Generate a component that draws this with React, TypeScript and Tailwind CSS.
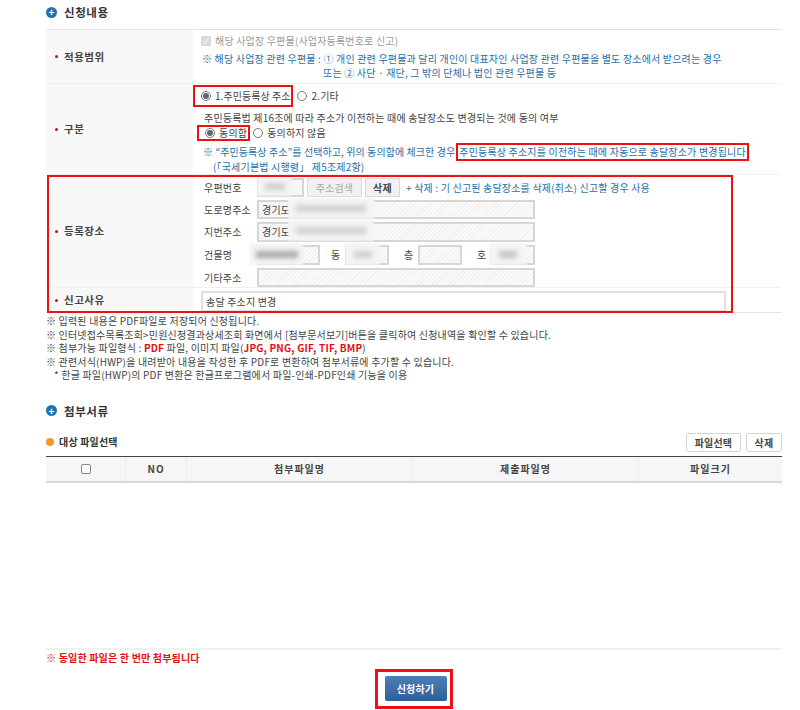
const hatch =
  "border-2 border-[#d6d6d6] bg-[repeating-linear-gradient(135deg,#f0f0f0_0px,#f0f0f0_1px,#fafafa_1px,#fafafa_3px)]";

function SectionTitle({ text }: { text: string }) {
  return (
    <div className="flex items-center gap-[7px] h-6">
      <span className="w-[11px] h-[11px] rounded-full bg-[#1f74b0] text-white flex items-center justify-center text-[10px] leading-none font-bold">
        +
      </span>
      <h2 className="text-[11.5px] font-bold text-[#333] tracking-[0.6px]">{text}</h2>
    </div>
  );
}

function Label({ text }: { text: string }) {
  return (
    <div className="w-[147px] shrink-0 bg-[#f8f8f8] flex items-center pl-[9px] gap-[6px] text-[10.5px] font-bold text-[#444] tracking-[0.5px]">
      <span className="w-[3px] h-[3px] rounded-full bg-[#d01010]" />
      {text}
    </div>
  );
}

function Radio({ on }: { on?: boolean }) {
  return (
    <span className="w-[10px] h-[10px] rounded-full border border-[#777] bg-white flex items-center justify-center shrink-0">
      {on && <span className="w-[6px] h-[6px] rounded-full bg-[#666]" />}
    </span>
  );
}

// masked-out personal data: pale patch with a grey smudge in the middle
function Blur({ className, smudge }: { className: string; smudge: string }) {
  return (
    <span className={"absolute bg-[#f4f4f4] blur-[1px] flex items-center justify-center " + className}>
      <span className={"h-[7px] blur-[2px] " + smudge} />
    </span>
  );
}

function AddressRow({ label, children }: { label: string; children: React.ReactNode }) {
  return (
    <div className="flex items-center">
      <span className="w-[53px] shrink-0 text-[#444]">{label}</span>
      {children}
    </div>
  );
}

export default function App() {
  return (
    <div className="relative w-[800px] h-[710px] bg-white overflow-hidden pl-[46px] pr-[18px] text-[10px] leading-[14px] text-[#444] font-['Noto_Sans_CJK_KR','Liberation_Sans',sans-serif] tracking-[0.18px]">
      <div className="h-[29px]">
        <SectionTitle text="신청내용" />
      </div>

      <div className="relative border-t border-[#e2e2e2] border-b border-b-[#e4e4e4]">
        <div className="flex h-[54px] border-b border-[#f0f0f0]">
          <Label text="적용범위" />
          <div className="flex-1 pl-[8px] pt-[3px]">
            <div className="flex items-center gap-[4px] text-[#999] h-[16px]">
              <span className="w-[10px] h-[10px] bg-[#d9d9d9] rounded-[1px] text-white text-[8px] leading-[10px] text-center">
                ✓
              </span>
              해당 사업장 우편물(사업자등록번호로 신고)
            </div>
            <p className="mt-[3px] pl-[1px] text-[#1f6ea5]">
              ※ 해당 사업장 관련 우편물 : ① 개인 관련 우편물과 달리 개인이 대표자인 사업장 관련 우편물을 별도 장소에서 받으려는 경우
            </p>
            <p className="pl-[122px] text-[#1f6ea5]">또는 ② 사단 · 재단, 그 밖의 단체나 법인 관련 우편물 등</p>
          </div>
        </div>

        <div className="flex h-[91px] border-b border-[#f0f0f0]">
          <Label text="구분" />
          <div className="flex-1">
            <div className="flex items-center h-[23px]">
              <span className="flex items-center gap-[4px] h-[22px] pl-[6px] pr-[1px] border-2 border-[#ee1111] tracking-[0.05px]">
                <Radio on />
                1.주민등록상 주소
              </span>
              <span className="flex items-center gap-[4px] ml-[4px]">
                <Radio />
                2.기타
              </span>
            </div>
            <p className="mt-[4px] pl-[11px]">주민등록법 제16조에 따라 주소가 이전하는 때에 송달장소도 변경되는 것에 동의 여부</p>
            <div className="flex items-center h-[16px] ml-[4px]">
              <span className="flex items-center gap-[4px] h-[16px] pl-[6px] pr-[1px] border-2 border-[#ee1111]">
                <Radio on />
                동의함
              </span>
              <span className="flex items-center gap-[4px] ml-[3px]">
                <Radio />
                동의하지 않음
              </span>
            </div>
            <div className="flex items-center mt-[2px] pl-[10px] text-[#1f6ea5] h-[17px]">
              <span className="tracking-[0.08px]">※ “주민등록상 주소”를 선택하고, 위의 동의함에 체크한 경우</span>
              <span className="ml-[1px] px-[1px] h-[18px] border-2 border-[#ee1111] leading-[14px] whitespace-nowrap">
                주민등록상 주소지를 이전하는 때에 자동으로 송달장소가 변경됩니다
              </span>
            </div>
            <p className="pl-[20px] text-[#1f6ea5]">(「국세기본법 시행령」 제5조제2항)</p>
          </div>
        </div>

        <div className="flex h-[113px] border-b border-[#f0f0f0]">
          <Label text="등록장소" />
          <div className="relative flex-1 pl-[11px] pt-[3px] flex flex-col gap-[3px]">
            <AddressRow label="우편번호">
              <span className={"w-[47px] h-[19px] " + hatch} />
              <span className="ml-[3px] w-[55px] h-[19px] border border-[#ddd] bg-[#f1f1f1] text-[#aaa] text-center leading-[17px]">
                주소검색
              </span>
              <span className="ml-[3px] w-[35px] h-[19px] border border-[#d8d8d8] bg-[#f1f1f1] font-bold text-center leading-[17px]">
                삭제
              </span>
              <span className="ml-[6px] text-[#1f6ea5] whitespace-nowrap">+ 삭제 : 기 신고된 송달장소를 삭제(취소) 신고할 경우 사용</span>
            </AddressRow>
            <AddressRow label="도로명주소">
              <span className={"w-[278px] h-[19px] pl-[3px] leading-[15px] " + hatch}>경기도</span>
            </AddressRow>
            <AddressRow label="지번주소">
              <span className={"w-[278px] h-[20px] pl-[3px] leading-[16px] " + hatch}>경기도</span>
            </AddressRow>
            <AddressRow label="건물명">
              <span className={"w-[63px] h-[20px] " + hatch} />
              <span className="ml-[11px] w-[14px]">동</span>
              <span className={"w-[44px] h-[20px] " + hatch} />
              <span className="ml-[15px] w-[14px]">층</span>
              <span className={"w-[44px] h-[20px] " + hatch} />
              <span className="ml-[15px] w-[13px]">호</span>
              <span className={"w-[45px] h-[20px] " + hatch} />
            </AddressRow>
            <AddressRow label="기타주소">
              <span className={"w-[278px] h-[19px] " + hatch} />
            </AddressRow>
            <Blur className="left-[64px] top-[2px] w-[35px] h-[19px]" smudge="w-[20px] bg-[#cfcfcf]" />
            <Blur className="left-[95px] top-[23px] w-[86px] h-[21px]" smudge="w-[70px] bg-[#d2d2d2]" />
            <Blur className="left-[95px] top-[45px] w-[86px] h-[21px]" smudge="w-[70px] bg-[#d2d2d2]" />
            <Blur className="left-[57px] top-[68px] w-[53px] h-[22px]" smudge="w-[42px] bg-[#aaaaaa]" />
            <Blur className="left-[152px] top-[68px] w-[35px] h-[22px]" smudge="w-[18px] bg-[#cfcfcf]" />
            <Blur className="left-[296px] top-[68px] w-[38px] h-[22px]" smudge="w-[18px] bg-[#c4c4c4]" />
          </div>
        </div>

        <div className="flex h-[24px]">
          <Label text="신고사유" />
          <div className="flex-1 pl-[8px] pt-[3px]">
            <div className="w-[525px] h-[21px] border-2 border-[#e0e0e0] pl-[3px] leading-[17px]">송달 주소지 변경</div>
          </div>
        </div>

        <div className="absolute left-[1px] top-[145px] w-[686px] h-[138px] border-2 border-[#ee1111] pointer-events-none" />
      </div>

      <div className="mt-[1px] leading-[13.6px]">
        <p>※ 입력된 내용은 PDF파일로 저장되어 신청됩니다.</p>
        <p>※ 인터넷접수목록조회&gt;민원신청결과상세조회 화면에서 [첨부문서보기]버튼을 클릭하여 신청내역을 확인할 수 있습니다.</p>
        <p>
          ※ 첨부가능 파일형식 : <b className="text-[#e01010]">PDF</b> 파일, 이미지 파일(
          <b className="text-[#e01010]">JPG, PNG, GIF, TIF, BMP</b>)
        </p>
        <p>※ 관련서식(HWP)을 내려받아 내용을 작성한 후 PDF로 변환하여 첨부서류에 추가할 수 있습니다.</p>
        <p className="pl-[8px]">* 한글 파일(HWP)의 PDF 변환은 한글프로그램에서 파일-인쇄-PDF인쇄 기능을 이용</p>
      </div>

      <div className="mt-[17px]">
        <SectionTitle text="첨부서류" />
      </div>

      <div className="flex items-center justify-between mt-[10px] h-[19px]">
        <div className="flex items-center gap-[5px] font-bold text-[#333]">
          <span className="w-[8px] h-[8px] rounded-full bg-[#ee9a2a]" />
          대상 파일선택
        </div>
        <div className="flex gap-[5px] font-bold">
          <span className="w-[55px] h-[19px] border border-[#d5d5d5] rounded-[2px] text-center leading-[17px]">파일선택</span>
          <span className="w-[36px] h-[19px] border border-[#d5d5d5] rounded-[2px] text-center leading-[17px]">삭제</span>
        </div>
      </div>

      <div className="mt-[4px] flex h-[27px] border-t border-[#444] border-b-2 border-b-[#d8d8d8] bg-[#f6f6f6] font-bold text-[#444] tracking-[1px]">
        <div className="w-[80px] flex items-center justify-center border-r border-[#eee]">
          <span className="w-[10px] h-[10px] border border-[#888] rounded-[2px] bg-white" />
        </div>
        <div className="w-[61px] flex items-center justify-center border-r border-[#eee]">NO</div>
        <div className="w-[226px] flex items-center justify-center border-r border-[#eee]">첨부파일명</div>
        <div className="w-[226px] flex items-center justify-center border-r border-[#eee]">제출파일명</div>
        <div className="flex-1 flex items-center justify-center">파일크기</div>
      </div>

      <div className="h-[167px] border-b-2 border-[#f0f0f0]" />

      <p className="mt-[1px] font-bold text-[#e01010]">※ 동일한 파일은 한 번만 첨부됩니다</p>

      <div className="flex justify-center mt-[4px]">
        <div className="w-[78px] h-[40px] border-[3px] border-[#ee1111] flex items-center justify-center">
          <button className="ml-[3px] w-[62px] h-[25px] rounded-[2px] bg-gradient-to-b from-[#4d7fb5] to-[#2f5f98] text-white font-bold text-[10px]">
            신청하기
          </button>
        </div>
      </div>
    </div>
  );
}
